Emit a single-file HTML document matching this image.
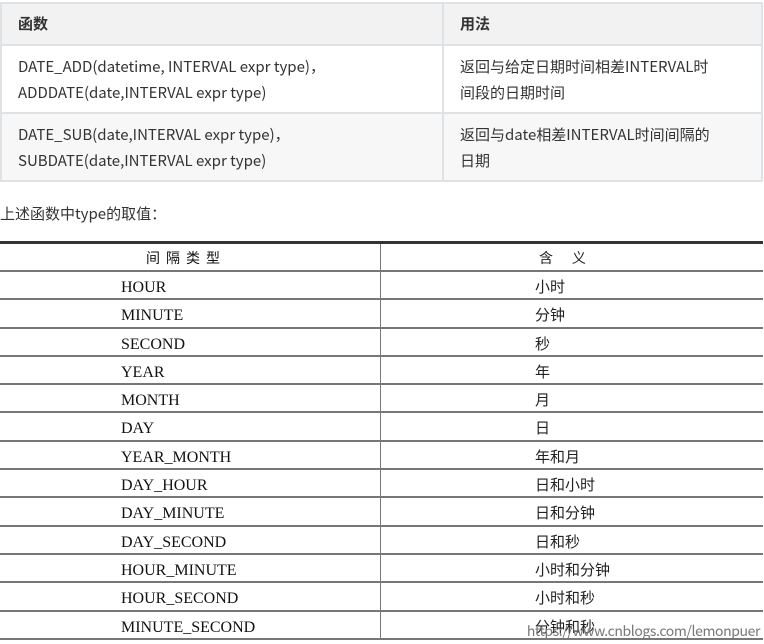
<!DOCTYPE html>
<html><head><meta charset="utf-8"><style>
body{margin:0;width:764px;height:641px;background:#fff;position:relative;overflow:hidden;font-family:"Noto Sans CJK SC","Liberation Sans",sans-serif;color:#333}
.t1{position:absolute;left:0;top:2px;width:763px;border-collapse:collapse;font-size:15px}
.t1 td{border:2px solid #dfe2e5;padding:0 16px;vertical-align:middle;line-height:26px}
.t1 tr.h td{background:#f2f2f2;font-weight:bold;height:40px}
.t1 tr.r td{height:64px;padding-top:2px}
.t1 tr.g td{background:#f7f7f7}
.p{position:absolute;left:0;top:203px;font-size:15px;color:#333}
.t2{position:absolute;left:0;top:241px;width:763px;border-top:3px solid #333}
.row{height:28.3px;box-sizing:border-box;border-bottom:2px solid #777;position:relative}
.row.h{height:28px}
.a,.b{position:absolute;top:0;height:100%;box-sizing:border-box}
.a{left:0;width:381px;border-right:1px solid #777;padding-left:121px;font-family:"Liberation Serif",serif;font-size:16px;color:#111;line-height:32px}
.b{left:382px;padding-left:153px;font-size:15px;color:#222;line-height:30px}
.h .a{padding-left:146px;letter-spacing:6px;font-family:"Noto Sans CJK SC",sans-serif;font-size:14px;line-height:28px}
.h .b{padding-left:157px;font-size:14px;line-height:28px}
.wm{position:absolute;right:4px;top:621px;font-size:14px;color:#777;font-family:"Noto Sans CJK SC",sans-serif;letter-spacing:-0.4px}
</style></head><body>
<table class="t1">
<tr class="h"><td style="width:408px">函数</td><td>用法</td></tr>
<tr class="r"><td>DATE_ADD(datetime, INTERVAL expr type)，<br>ADDDATE(date,INTERVAL expr type)</td><td>返回与给定日期时间相差INTERVAL时<br>间段的日期时间</td></tr>
<tr class="r g"><td>DATE_SUB(date,INTERVAL expr type)，<br>SUBDATE(date,INTERVAL expr type)</td><td>返回与date相差INTERVAL时间间隔的<br>日期</td></tr>
</table>
<div class="p">上述函数中type的取值：</div>
<div class="t2">
<div class="row h"><div class="a">间隔类型</div><div class="b">含&nbsp;&nbsp;&nbsp;&nbsp;&nbsp;&nbsp;义</div></div>
<div class="row"><div class="a">HOUR</div><div class="b">小时</div></div>
<div class="row"><div class="a">MINUTE</div><div class="b">分钟</div></div>
<div class="row"><div class="a">SECOND</div><div class="b">秒</div></div>
<div class="row"><div class="a">YEAR</div><div class="b">年</div></div>
<div class="row"><div class="a">MONTH</div><div class="b">月</div></div>
<div class="row"><div class="a">DAY</div><div class="b">日</div></div>
<div class="row"><div class="a">YEAR_MONTH</div><div class="b">年和月</div></div>
<div class="row"><div class="a">DAY_HOUR</div><div class="b">日和小时</div></div>
<div class="row"><div class="a">DAY_MINUTE</div><div class="b">日和分钟</div></div>
<div class="row"><div class="a">DAY_SECOND</div><div class="b">日和秒</div></div>
<div class="row"><div class="a">HOUR_MINUTE</div><div class="b">小时和分钟</div></div>
<div class="row"><div class="a">HOUR_SECOND</div><div class="b">小时和秒</div></div>
<div class="row"><div class="a">MINUTE_SECOND</div><div class="b">分钟和秒</div></div>
</div>
<div class="wm">https://www.cnblogs.com/lemonpuer</div>
</body></html>
